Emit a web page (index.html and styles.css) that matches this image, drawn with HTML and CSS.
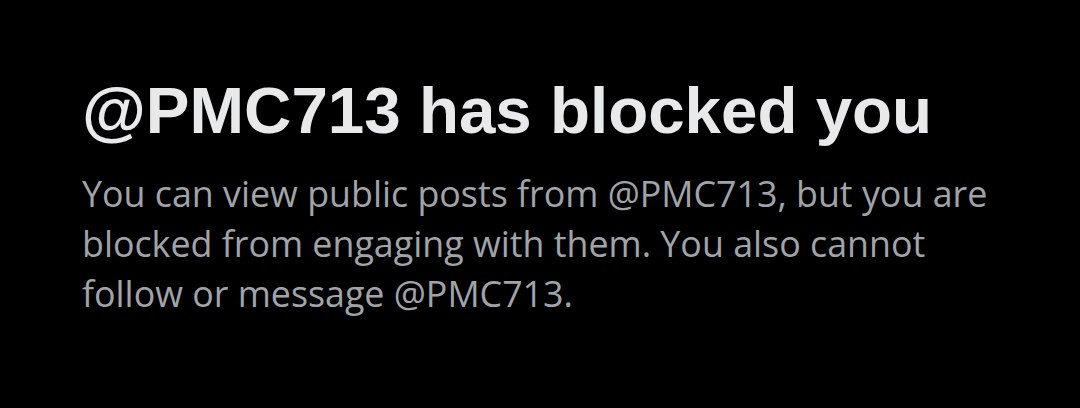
FILE: index.html
```html
<!DOCTYPE html>
<html lang="en">
<head>
  <meta charset="UTF-8">
  <title>Blocked</title>
  <link rel="stylesheet" href="styles.css">
</head>
<body>
  <div class="notice">
    <h1 class="notice-title">@PMC713 has blocked you</h1>
    <p class="notice-text">You can view public posts from @PMC713, but you are blocked from engaging with them. You also cannot follow or message @PMC713.</p>
  </div>
</body>
</html>
```

FILE: styles.css
```css
body {
  margin: 0;
  background: #000;
  height: 408px;
}

.notice {
  padding: 75px 82px 0 82px;
  width: 916px;
}

.notice-title {
  font-family: "Liberation Sans", Arial, sans-serif;
  font-weight: bold;
  font-size: 65.5px;
  line-height: 72px;
  color: #e7e9ea;
  margin: 0 0 21px 0;
}

.notice-text {
  font-family: "Open Sans", sans-serif;
  font-size: 35.8px;
  line-height: 50px;
  color: #a0a4a8;
  margin: 0;
}
```
